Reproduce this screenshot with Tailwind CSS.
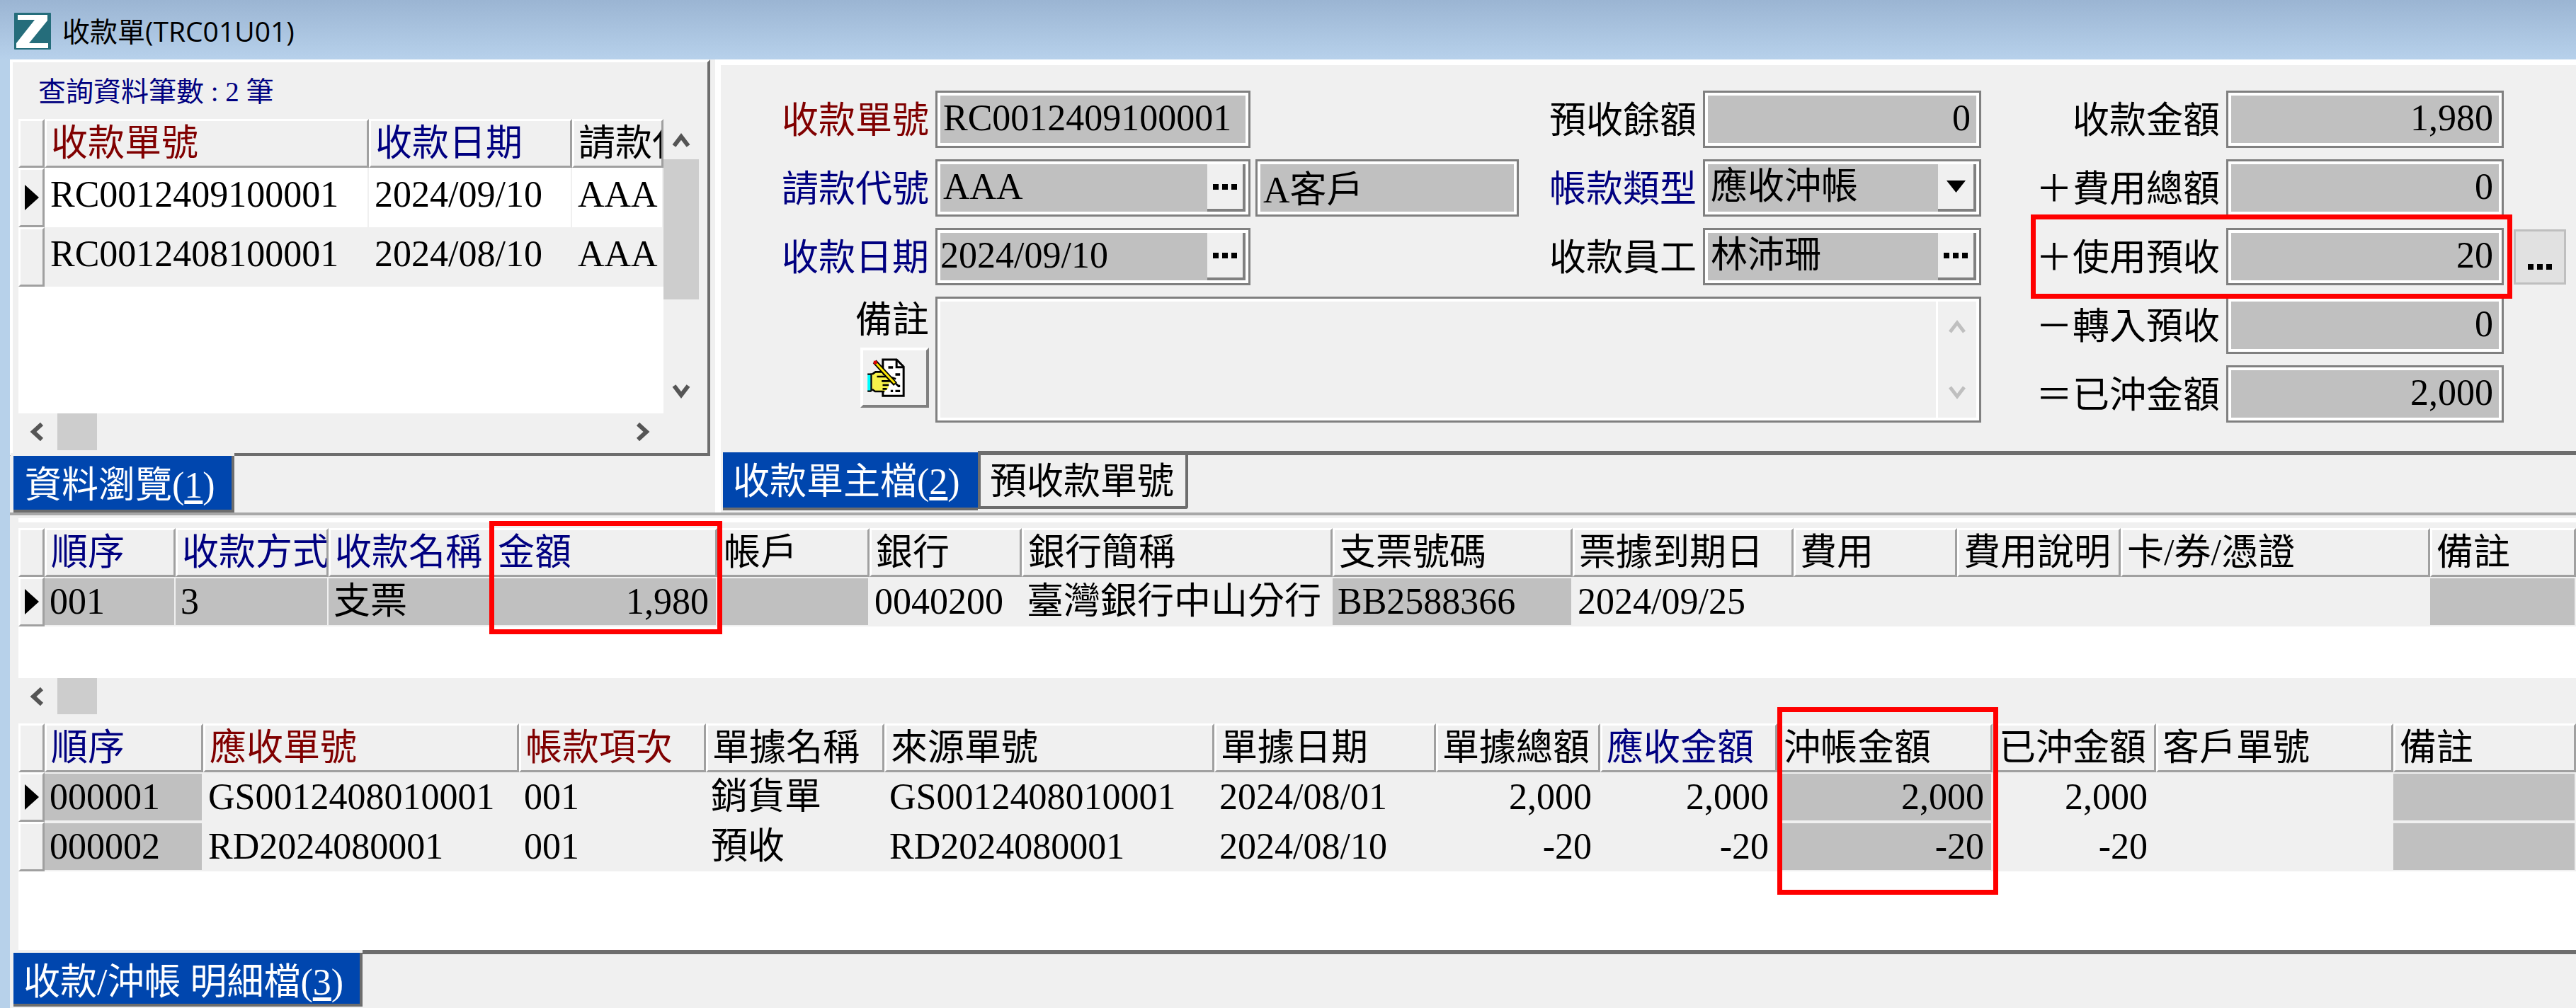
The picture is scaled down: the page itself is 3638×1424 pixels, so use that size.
<!DOCTYPE html>
<html lang="zh-Hant">
<head>
    <meta charset="UTF-8">
    <meta name="viewport" content="width=device-width, initial-scale=1.0">
    <title>收款單(TRC01U01)</title>
    <script src="https://cdn.jsdelivr.net/npm/@tailwindcss/browser@4"></script>
</head>
<body class="min-h-screen flex flex-col overflow-x-hidden bg-[#b7d1ea] font-['Liberation_Serif','Noto_Sans_CJK_TC',serif] text-[52px] leading-[60px] text-black">
    <!-- Barra de título -->
    <header class="h-[84px] shrink-0 flex items-center gap-4 pl-5 pt-1 bg-gradient-to-b from-[#9bb5d3] to-[#b7d1eb]">
        <svg class="w-[52px] h-[52px]" viewBox="0 0 52 52">
            <rect width="52" height="52" rx="1" fill="#256d7b"/>
            <path d="M5 3h42v8L21 43h27v7H3v-7L29 10H5z" fill="#fff"/>
        </svg>
        <h1 class="font-['Open_Sans','Noto_Sans_CJK_TC',sans-serif] text-[39px] leading-[48px]">收款單(TRC01U01)</h1>
    </header>

    <main class="grow flex flex-col ml-[14px] bg-[#f0f0f0]">
        <div class="grid grid-cols-[996fr_2628fr]">
            <!-- Lista de resultados -->
            <section class="min-w-0 pr-[7px]">
                <div class="h-[560px] border-4 border-t-white border-l-white border-r-[#6d6d6d] border-b-[#6d6d6d] pl-2 pr-[12px] flex flex-col">
                    <p class="h-[80px] pl-7 pt-[18px] text-[39px] leading-[48px] text-[#000080]">查詢資料筆數 : 2 筆</p>
                    <div class="flex h-[416px]">
                        <div class="grow min-w-0 bg-white">
                            <table class="w-full table-fixed border-separate border-spacing-0 text-left whitespace-nowrap [&_th]:h-[69px] [&_td]:h-[84px] [&_th]:p-0 [&_td]:p-0 [&_th]:overflow-hidden [&_td]:overflow-hidden [&_th]:font-normal [&_th]:pl-[6px] [&_td]:pl-2 [&_td]:pb-2 [&_td]:border-r-2 [&_td]:border-[#f0f0f0] [&_th]:bg-[#f0f0f0] [&_th]:border-[3px] [&_th]:border-t-white [&_th]:border-l-white [&_th]:border-r-[#a0a0a0] [&_th]:border-b-[#a0a0a0]">
                                <thead>
                                    <tr>
                                        <th class="w-[37px]"></th>
                                        <th class="w-[458px] text-[#800000]">收款單號</th>
                                        <th class="w-[287px] text-[#000080]">收款日期</th>
                                        <th>請款代號</th>
                                    </tr>
                                </thead>
                                <tbody>
                                    <tr>
                                        <th><svg class="w-5 h-9" viewBox="0 0 20 36"><path d="M0 0l20 18L0 36z"/></svg></th>
                                        <td>RC0012409100001</td>
                                        <td>2024/09/10</td>
                                        <td>AAA</td>
                                    </tr>
                                    <tr class="bg-[#f0f0f0]">
                                        <th></th>
                                        <td>RC0012408100001</td>
                                        <td>2024/08/10</td>
                                        <td>AAA</td>
                                    </tr>
                                </tbody>
                            </table>
                        </div>
                        <div class="w-[50px] shrink-0 flex flex-col items-center">
                            <svg class="w-[26px] h-[22px] mt-[19px]" viewBox="0 0 26 22"><path d="M3 19L13 6l10 13" fill="none" stroke="#555" stroke-width="6"/></svg>
                            <div class="w-full h-[198px] mt-4 bg-[#cdcdcd]"></div>
                            <svg class="w-[26px] h-[22px] mt-auto mb-[20px]" viewBox="0 0 26 22"><path d="M3 3l10 13L23 3" fill="none" stroke="#555" stroke-width="6"/></svg>
                        </div>
                    </div>
                    <div class="h-[52px] flex items-center pl-4">
                        <svg class="w-[20px] h-[26px]" viewBox="0 0 20 26"><path d="M17 2L5 13l12 11" fill="none" stroke="#555" stroke-width="6"/></svg>
                        <div class="w-14 h-full ml-[19px] bg-[#cdcdcd]"></div>
                        <svg class="w-[20px] h-[26px] ml-auto mr-[69px]" viewBox="0 0 20 26"><path d="M3 2l12 11L3 24" fill="none" stroke="#555" stroke-width="6"/></svg>
                    </div>
                </div>
                <a href="#" class="block w-[316px] h-[84px] -mt-1 ml-[1px] border-l-4 border-t-4 border-[#f0f0f0] relative">
                    <span class="block h-full pl-4 pt-3 bg-[#0046ae] text-white border-r-4 border-b-4 border-[#6d6d6d]">資料瀏覽(<u class="underline-offset-4">1</u>)</span>
                </a>
            </section>

            <!-- Ficha principal -->
            <section class="min-w-0 border-t-8 border-l-8 border-white">
                <form class="grid grid-cols-[303px_minmax(0,445fr)_minmax(0,379fr)_260px_minmax(0,393fr)_346px_minmax(0,392fr)_102px] grid-rows-[repeat(5,81px)] gap-y-4 items-center pt-[36px] [&_label]:text-right [&_label]:pt-1 [&_label]:pr-[9px] [&_label]:whitespace-nowrap">
                    <label for="no" class="text-[#800000]">收款單號</label>
                    <div class="h-full p-1 bg-white border-[3px] border-[#808080]"><input id="no" readonly value="RC0012409100001" class="block w-full h-full pl-1 pb-1 bg-[#c0c0c0]"></div>
                    <label for="bal" class="col-start-4">預收餘額</label>
                    <div class="h-full p-1 bg-white border-[3px] border-[#808080]"><input id="bal" readonly value="0" class="block w-full h-full pr-2 pb-1 bg-[#c0c0c0] text-right"></div>
                    <label for="amt">收款金額</label>
                    <div class="h-full p-1 bg-white border-[3px] border-[#808080]"><input id="amt" readonly value="1,980" class="block w-full h-full pr-2 pb-1 bg-[#c0c0c0] text-right"></div>

                    <label for="cust" class="col-start-1 text-[#000080]">請款代號</label>
                    <div class="h-full p-1 bg-white border-[3px] border-[#808080] flex">
                        <input id="cust" readonly value="AAA" class="grow min-w-0 pl-1 pb-1 bg-[#c0c0c0]">
                        <button type="button" aria-label="選擇請款代號" class="w-[54px] shrink-0 flex items-center justify-center bg-[#f0f0f0] border-r-4 border-b-4 border-[#808080]"><svg class="w-[34px] h-2" viewBox="0 0 34 8"><path d="M0 0h8v8H0zM13 0h8v8h-8zM26 0h8v8h-8z"/></svg></button>
                    </div>
                    <div class="h-full ml-[7px] p-1 bg-white border-[3px] border-[#808080]"><input aria-label="客戶名稱" readonly value="A客戶" class="block w-full h-full pl-1 pb-1 bg-[#c0c0c0]"></div>
                    <label for="type" class="text-[#000080]">帳款類型</label>
                    <div class="relative h-full p-1 bg-white border-[3px] border-[#808080]">
                        <select id="type" class="block w-full h-full appearance-none pl-1 pb-1 bg-[#c0c0c0]"><option>應收沖帳</option></select>
                        <span class="absolute top-1 right-1 bottom-1 w-[54px] pointer-events-none flex items-center justify-center bg-[#f0f0f0] border-r-4 border-b-4 border-[#808080]"><svg class="w-[27px] h-[17px]" viewBox="0 0 27 17"><path d="M0 0h27L13.500 17z"/></svg></span>
                    </div>
                    <label for="fee">＋費用總額</label>
                    <div class="h-full p-1 bg-white border-[3px] border-[#808080]"><input id="fee" readonly value="0" class="block w-full h-full pr-2 pb-1 bg-[#c0c0c0] text-right"></div>

                    <label for="date" class="col-start-1 text-[#000080]">收款日期</label>
                    <div class="h-full p-1 bg-white border-[3px] border-[#808080] flex">
                        <input id="date" readonly value="2024/09/10" class="grow min-w-0 pb-1 bg-[#c0c0c0]">
                        <button type="button" aria-label="選擇日期" class="w-[54px] shrink-0 flex items-center justify-center bg-[#f0f0f0] border-r-4 border-b-4 border-[#808080]"><svg class="w-[34px] h-2" viewBox="0 0 34 8"><path d="M0 0h8v8H0zM13 0h8v8h-8zM26 0h8v8h-8z"/></svg></button>
                    </div>
                    <label for="emp" class="col-start-4">收款員工</label>
                    <div class="h-full p-1 bg-white border-[3px] border-[#808080] flex">
                        <input id="emp" readonly value="林沛珊" class="grow min-w-0 pl-1 pb-1 bg-[#c0c0c0]">
                        <button type="button" aria-label="選擇員工" class="w-[54px] shrink-0 flex items-center justify-center bg-[#f0f0f0] border-r-4 border-b-4 border-[#808080]"><svg class="w-[34px] h-2" viewBox="0 0 34 8"><path d="M0 0h8v8H0zM13 0h8v8h-8zM26 0h8v8h-8z"/></svg></button>
                    </div>
                    <label for="used">＋使用預收</label>
                    <div class="relative h-full p-1 bg-white border-[3px] border-[#808080]">
                        <input id="used" readonly value="20" class="block w-full h-full pr-2 pb-1 bg-[#c0c0c0] text-right">
                        <span class="absolute z-10 -top-[22px] -bottom-[22px] -left-[279px] -right-[15px] border-[7px] border-[#ff0000] pointer-events-none"></span>
                    </div>
                    <button type="button" aria-label="預收明細" class="w-[74px] h-[78px] ml-[14px] flex items-end justify-center pb-[18px] bg-[#e1e1e1] border-[3px] border-[#bfbfbf]"><svg class="w-[34px] h-2" viewBox="0 0 34 8"><path d="M0 0h8v8H0zM13 0h8v8h-8zM26 0h8v8h-8z"/></svg></button>

                    <div class="col-start-1 row-span-2 self-start flex flex-col items-end">
                        <label for="memo">備註</label>
                        <button type="button" aria-label="編輯備註" class="w-[97px] h-[85px] mt-2 mr-[9px] pl-[6px] flex items-center bg-[#f0f0f0] border-4 border-t-white border-l-white border-r-[#808080] border-b-[#808080]">
                            <svg class="w-[53px] h-[55px]" viewBox="130 78 158 165">
                                <path d="M195 84h58l30 30v124h-88z" fill="#fff" stroke="#000" stroke-width="9"/>
                                <path d="M253 84v32h32" fill="none" stroke="#000" stroke-width="9"/>
                                <path d="M218 117h20M248 147h20M258 196h10M228 217h10M248 217h20" stroke="#000" stroke-width="10"/>
                                <path d="M130 148h14v68h-14z" fill="#0ff"/>
                                <path d="M130 146h16M130 218h16M146 142v76" stroke="#000" stroke-width="7"/>
                                <path d="M150 148l15-10h24l10 14 42 16v16h-20l-4 22-14 12h-46l-7-10z" fill="#f7f24a"/>
                                <path d="M150 146l14-10h26M170 156h50l30 10M190 175h42M194 192h26M194 208h18M150 210l12 9h40" fill="none" stroke="#000" stroke-width="8"/>
                                <path d="M160 92l88 96" stroke="#000" stroke-width="20"/>
                                <path d="M165 98l80 86" stroke="#ffe800" stroke-width="9"/>
                                <path d="M156 89h14v14h-14z" fill="#e00000"/>
                                <path d="M250 186l14 13" stroke="#000" stroke-width="8"/>
                            </svg>
                        </button>
                    </div>
                    <div class="col-span-4 row-span-2 h-full flex bg-white p-1 border-[3px] border-[#808080]">
                        <textarea id="memo" readonly class="grow h-full resize-none bg-[#f0f0f0]"></textarea>
                        <div class="w-[54px] ml-[3px] flex flex-col items-center justify-between py-6 bg-[#f0f0f0]">
                            <svg class="w-[26px] h-[22px]" viewBox="0 0 26 22"><path d="M3 19L13 6l10 13" fill="none" stroke="#bfbfbf" stroke-width="5"/></svg>
                            <svg class="w-[26px] h-[22px]" viewBox="0 0 26 22"><path d="M3 3l10 13L23 3" fill="none" stroke="#bfbfbf" stroke-width="5"/></svg>
                        </div>
                    </div>
                    <label for="turn">－轉入預收</label>
                    <div class="h-full p-1 bg-white border-[3px] border-[#808080]"><input id="turn" readonly value="0" class="block w-full h-full pr-2 pb-1 bg-[#c0c0c0] text-right"></div>

                    <label for="done" class="col-start-6">＝已沖金額</label>
                    <div class="h-full p-1 bg-white border-[3px] border-[#808080]"><input id="done" readonly value="2,000" class="block w-full h-full pr-2 pb-1 bg-[#c0c0c0] text-right"></div>
                </form>
                <nav class="flex mt-[40px] ml-[3px] h-[84px] items-start">
                    <a href="#" class="w-[360px] h-[82px] mt-[2px] pl-[14px] pt-3 bg-[#0046ae] text-white border-b-4 border-[#6d6d6d] whitespace-nowrap">收款單主檔(<u class="underline-offset-4">2</u>)</a>
                    <div class="grow flex items-start border-t-[6px] border-[#6d6d6d]">
                        <a href="#" class="w-[297px] h-[76px] pl-[13px] pt-2 border-l-4 border-r-4 border-b-4 border-[#6d6d6d] rounded-br whitespace-nowrap">預收款單號</a>
                    </div>
                </nav>
            </section>
        </div>

        <!-- Detalle de cobros -->
        <section class="border-t-4 border-[#a8a8a8] pl-3">
            <div class="border-t-[6px] border-white mt-1"></div>
            <div class="h-[212px] mt-2 bg-white">
                <table class="w-full table-fixed border-separate border-spacing-0 text-left whitespace-nowrap [&_th]:h-[69px] [&_td]:h-[70px] [&_th]:p-0 [&_td]:p-0 [&_th]:font-normal [&_th]:pl-[6px] [&_td]:pl-[7px] [&_td]:overflow-hidden [&_td]:border-2 [&_td]:border-l-0 [&_td]:border-[#f0f0f0] [&_th]:bg-[#f0f0f0] [&_th]:border-[3px] [&_th]:border-t-white [&_th]:border-l-white [&_th]:border-r-[#a0a0a0] [&_th]:border-b-[#a0a0a0]">
                    <thead>
                        <tr>
                            <th class="w-[37px]"></th>
                            <th class="w-[185px] text-[#000080]">順序</th>
                            <th class="w-[216px] overflow-hidden text-[#000080]">收款方式</th>
                            <th class="w-[230px] text-[#000080]">收款名稱</th>
                            <th class="w-[319px] relative text-[#000080]">金額<span class="absolute z-10 -top-[13px] -left-[6px] -right-[10px] h-[160px] border-[7px] border-[#ff0000]"></span></th>
                            <th class="w-[215px]">帳戶</th>
                            <th class="w-[215px]">銀行</th>
                            <th class="w-[439px]">銀行簡稱</th>
                            <th class="w-[339px]">支票號碼</th>
                            <th class="w-[312px]">票據到期日</th>
                            <th class="w-[231px]">費用</th>
                            <th class="w-[231px]">費用說明</th>
                            <th class="w-[437px]">卡/券/憑證</th>
                            <th>備註</th>
                        </tr>
                    </thead>
                    <tbody>
                        <tr class="bg-[#f0f0f0]">
                            <th><svg class="w-5 h-9" viewBox="0 0 20 36"><path d="M0 0l20 18L0 36z"/></svg></th>
                            <td class="bg-[#c0c0c0]">001</td>
                            <td class="bg-[#c0c0c0]">3</td>
                            <td class="bg-[#c0c0c0]">支票</td>
                            <td class="bg-[#c0c0c0] text-right pr-[10px]!">1,980</td>
                            <td class="bg-[#c0c0c0]"></td>
                            <td>0040200</td>
                            <td>臺灣銀行中山分行</td>
                            <td class="bg-[#c0c0c0]">BB2588366</td>
                            <td>2024/09/25</td>
                            <td></td>
                            <td></td>
                            <td></td>
                            <td class="bg-[#c0c0c0]"></td>
                        </tr>
                    </tbody>
                </table>
            </div>
            <div class="h-[51px] flex items-center pl-4">
                <svg class="w-[20px] h-[26px]" viewBox="0 0 20 26"><path d="M17 2L5 13l12 11" fill="none" stroke="#555" stroke-width="6"/></svg>
                <div class="w-14 h-full ml-[19px] bg-[#cdcdcd]"></div>
            </div>

            <!-- Detalle de aplicación -->
            <div class="h-[320px] mt-[13px] bg-white">
                <table class="w-full table-fixed border-separate border-spacing-0 text-left whitespace-nowrap [&_th]:h-[69px] [&_td]:h-[70px] [&_th]:p-0 [&_td]:p-0 [&_th]:font-normal [&_th]:pl-[6px] [&_td]:pl-[7px] [&_td]:overflow-hidden [&_td]:border-2 [&_td]:border-l-0 [&_td]:border-[#f0f0f0] [&_th]:bg-[#f0f0f0] [&_th]:border-[3px] [&_th]:border-t-white [&_th]:border-l-white [&_th]:border-r-[#a0a0a0] [&_th]:border-b-[#a0a0a0]">
                    <thead>
                        <tr>
                            <th class="w-[37px]"></th>
                            <th class="w-[224px] text-[#000080]">順序</th>
                            <th class="w-[446px] text-[#800000]">應收單號</th>
                            <th class="w-[264px] text-[#800000]">帳款項次</th>
                            <th class="w-[252px]">單據名稱</th>
                            <th class="w-[466px]">來源單號</th>
                            <th class="w-[313px]">單據日期</th>
                            <th class="w-[232px]">單據總額</th>
                            <th class="w-[250px] text-[#000080]">應收金額</th>
                            <th class="w-[304px] relative">沖帳金額<span class="absolute z-10 -top-[26px] -left-[3px] -right-[11px] h-[265px] border-[7px] border-[#ff0000]"></span></th>
                            <th class="w-[231px]">已沖金額</th>
                            <th class="w-[335px]">客戶單號</th>
                            <th>備註</th>
                        </tr>
                    </thead>
                    <tbody class="bg-[#f0f0f0]">
                        <tr>
                            <th><svg class="w-5 h-9" viewBox="0 0 20 36"><path d="M0 0l20 18L0 36z"/></svg></th>
                            <td class="bg-[#c0c0c0]">000001</td>
                            <td>GS0012408010001</td>
                            <td>001</td>
                            <td>銷貨單</td>
                            <td>GS0012408010001</td>
                            <td>2024/08/01</td>
                            <td class="text-right pr-[10px]!">2,000</td>
                            <td class="text-right pr-[10px]!">2,000</td>
                            <td class="bg-[#c0c0c0] text-right pr-[10px]!">2,000</td>
                            <td class="text-right pr-[10px]!">2,000</td>
                            <td></td>
                            <td class="bg-[#c0c0c0]"></td>
                        </tr>
                        <tr>
                            <th></th>
                            <td class="bg-[#c0c0c0]">000002</td>
                            <td>RD2024080001</td>
                            <td>001</td>
                            <td>預收</td>
                            <td>RD2024080001</td>
                            <td>2024/08/10</td>
                            <td class="text-right pr-[10px]!">-20</td>
                            <td class="text-right pr-[10px]!">-20</td>
                            <td class="bg-[#c0c0c0] text-right pr-[10px]!">-20</td>
                            <td class="text-right pr-[10px]!">-20</td>
                            <td></td>
                            <td class="bg-[#c0c0c0]"></td>
                        </tr>
                    </tbody>
                </table>
            </div>
        </section>
        <div class="flex pl-[5px]">
            <a href="#" class="w-[493px] h-[76px] mt-1 pl-[14px] pt-3 bg-[#0046ae] text-white border-r-4 border-b-4 border-[#6d6d6d] whitespace-nowrap">收款/沖帳 明細檔(<u class="underline-offset-4">3</u>)</a>
            <div class="grow border-t-[6px] border-[#6d6d6d]"></div>
        </div>
    </main>
</body>
</html>
